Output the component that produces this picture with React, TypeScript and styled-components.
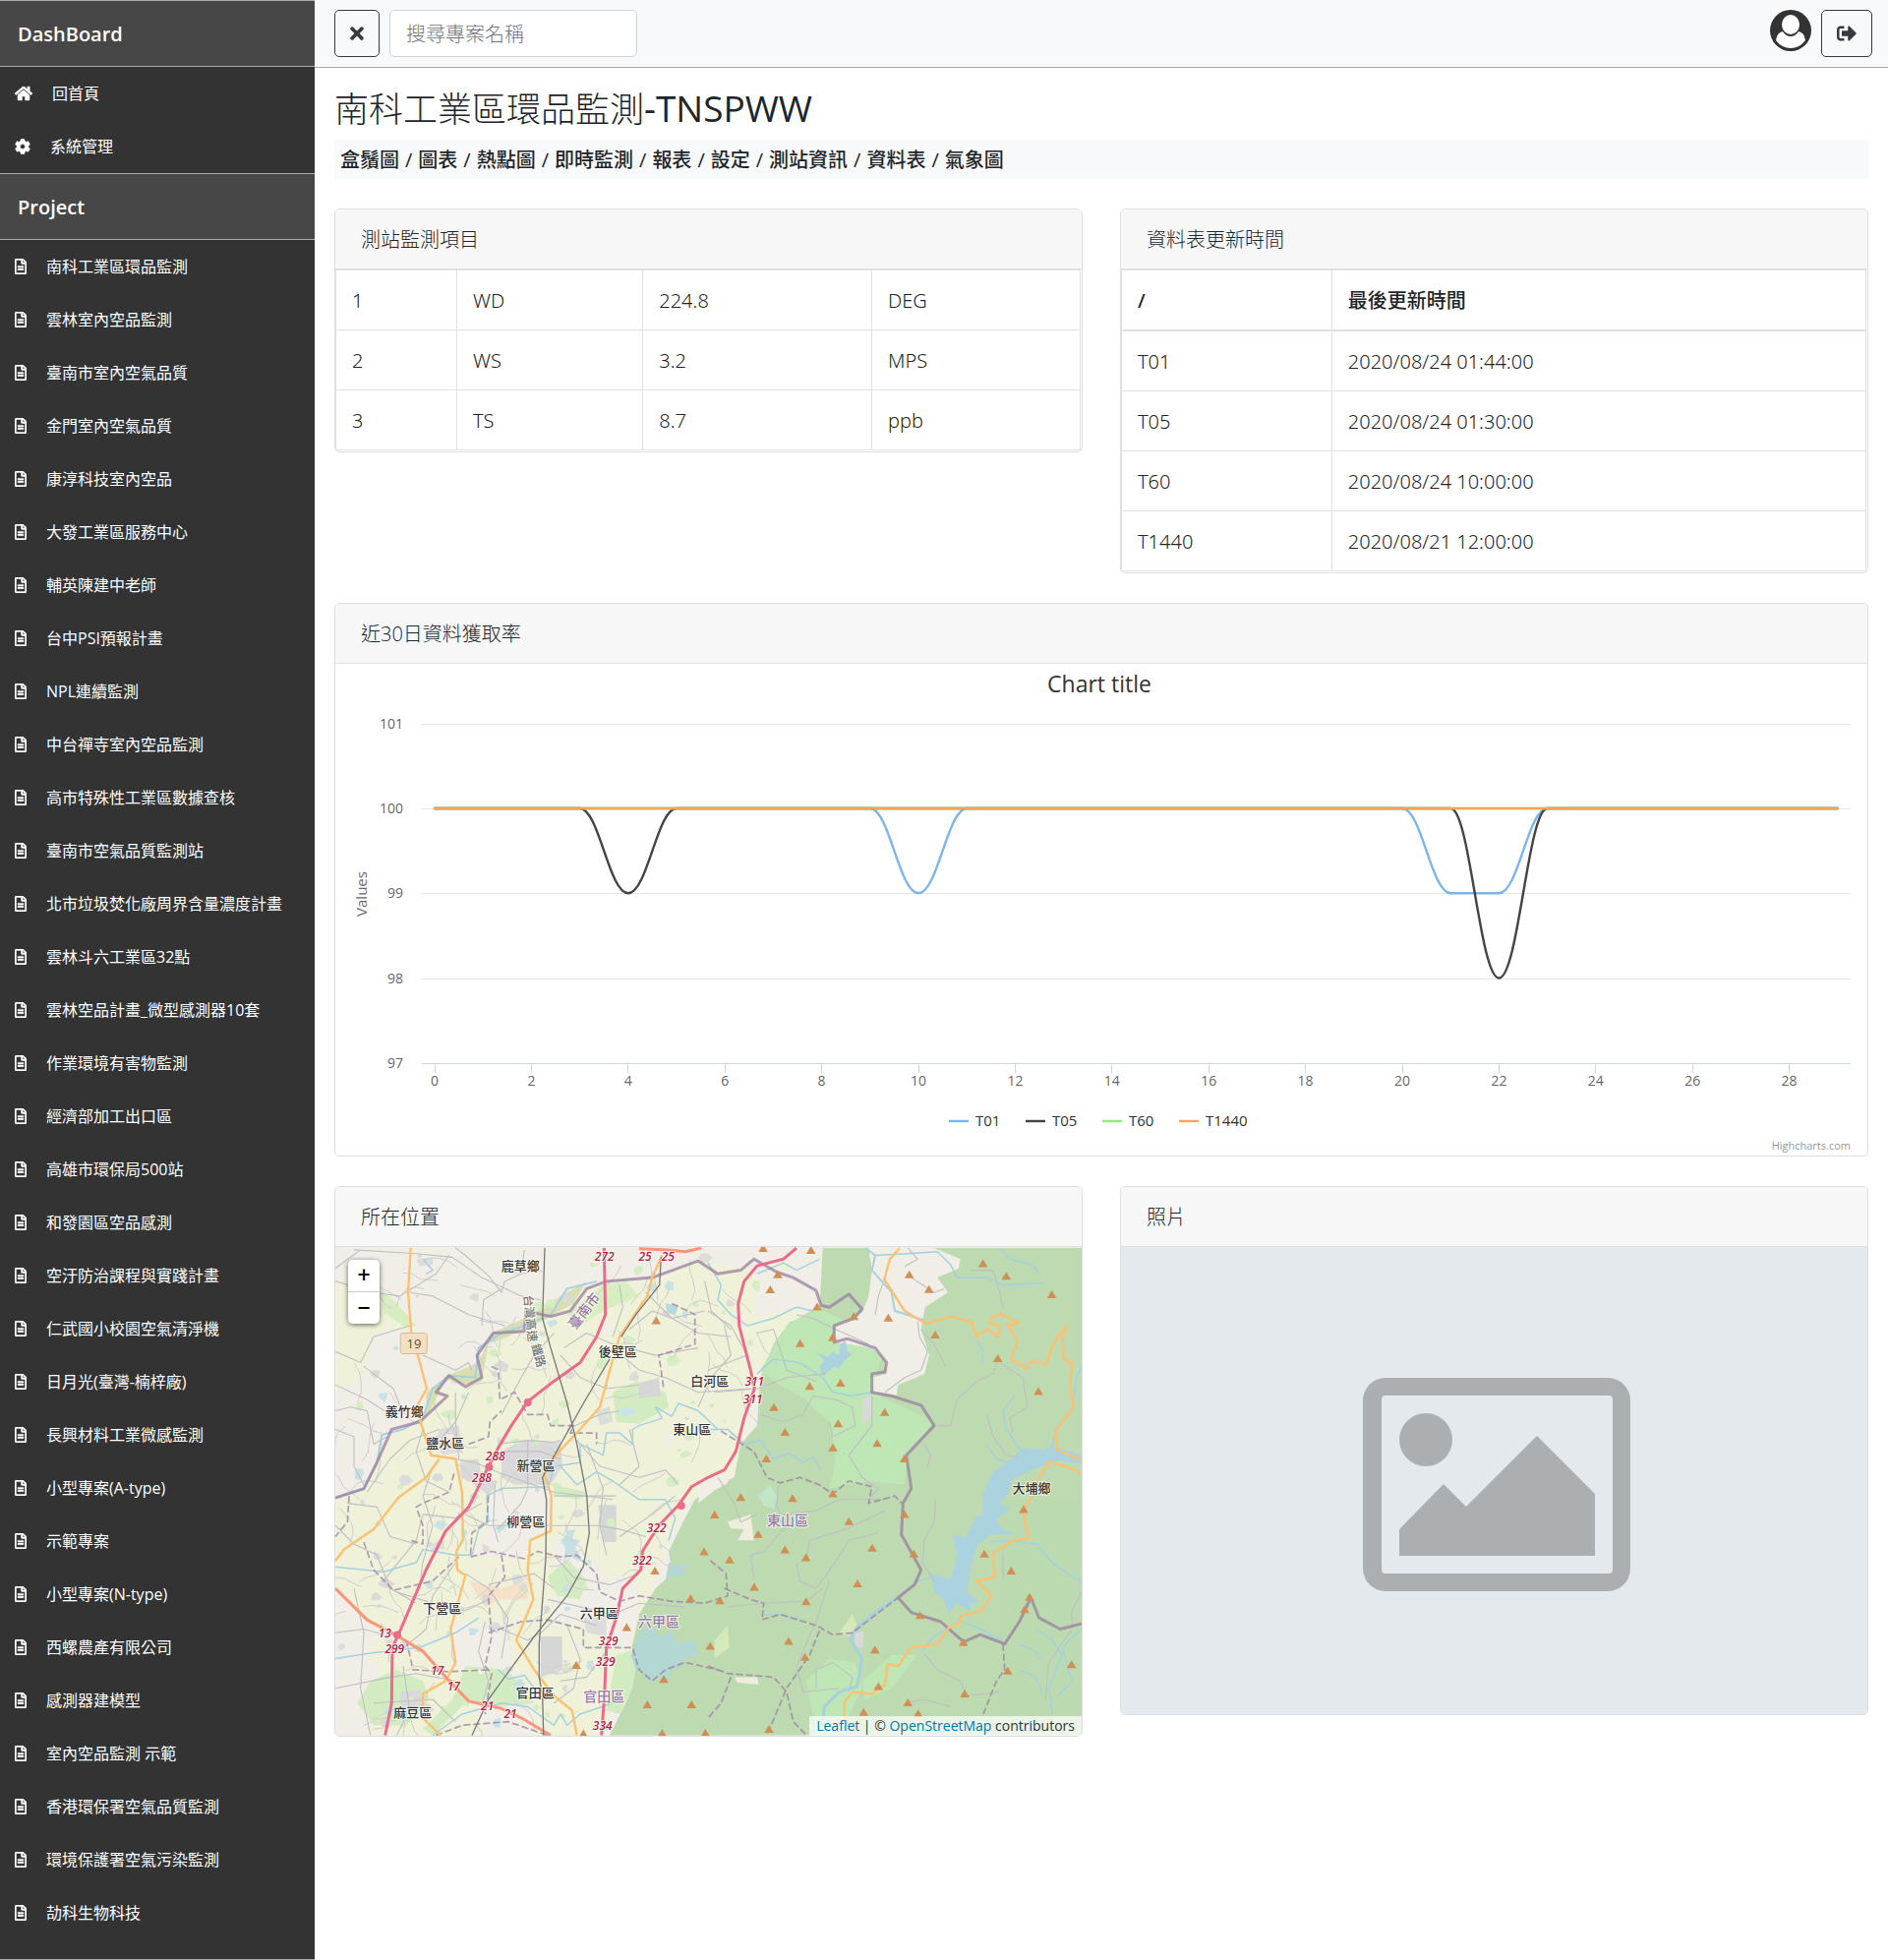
import React from "react";
import styled, { createGlobalStyle, css } from "styled-components";
import { FaHome, FaCog, FaRegFileAlt, FaTimes, FaSignOutAlt } from "react-icons/fa";

const GlobalStyle = createGlobalStyle`
  *, *::before, *::after { box-sizing: border-box; }
  body {
    margin: 0;
    background: #fff;
    color: #212529;
    font-family: "Open Sans", "Noto Sans CJK TC", sans-serif;
    font-size: 20px;
    line-height: 30px;
  }
`;

/* ---------- page frame ---------- */

const Page = styled.div`
  display: flex;
  align-items: stretch;
  min-height: 100vh;
`;

const Sidebar = styled.nav`
  flex: 0 0 320px;
  background: #333;
  color: #fff;
  padding-bottom: 19px;
  border-bottom: 1px solid #aaa;
`;

const SidebarHeading = styled.h2`
  margin: 0;
  padding: 19px 18px 17px;
  border-top: 1px solid #aaa;
  border-bottom: 1px solid #aaa;
  background: #474747;
  font-size: 20px;
  line-height: 30px;
  font-weight: 600;
`;

const MenuList = styled.ul`
  list-style: none;
  margin: 0;
  padding: 0;
`;

const MenuLink = styled.a<{ $icon: number }>`
  display: flex;
  align-items: center;
  gap: 20px;
  height: 54px;
  padding: 0 15px;
  color: #fff;
  font-size: 16px;
  line-height: 24px;
  text-decoration: none;
  white-space: nowrap;

  svg {
    flex: none;
    width: ${(p) => p.$icon}px;
    height: 16px;
    stroke-width: 14px;
  }
`;

const Content = styled.div`
  flex: 1;
  min-width: 0;
`;

const TopBar = styled.header`
  display: flex;
  align-items: flex-start;
  gap: 10px;
  padding: 10px 16px 10px 20px;
  background: #f8f9fa;
  border-bottom: 1px solid #aaa;
`;

const OutlineButton = styled.button<{ $icon: number }>`
  display: flex;
  align-items: center;
  height: 48px;
  padding: 0 15px;
  border: 1px solid #343a40;
  border-radius: 5px;
  background: transparent;
  color: #343a40;
  cursor: pointer;

  svg {
    flex: none;
    width: ${(p) => p.$icon}px;
    height: 20px;
  }
`;

const SearchInput = styled.input`
  width: 252px;
  height: 48px;
  margin-right: auto;
  padding: 0 16px;
  border: 1px solid #ced4da;
  border-radius: 5px;
  background: #fff;
  font: inherit;
  font-weight: 300;
  color: #495057;

  &::placeholder {
    color: #6c757d;
    opacity: 1;
  }
`;

const Main = styled.main`
  padding: 20px 20px 0;
`;

const Title = styled.h1`
  margin: 0 0 10px;
  font-size: 35px;
  line-height: 42px;
  font-weight: 300;
`;

const TitleCode = styled.span`
  font-size: 37px;
  font-weight: 400;
`;

const Crumbs = styled.nav`
  padding: 6px 6px 4px;
  margin-bottom: 30px;
  background: #f8f9fa;
  font-weight: 500;

  a {
    color: inherit;
    text-decoration: none;
  }
`;

const Slash = styled.span`
  margin: 0 6px;
`;

const CardGrid = styled.div`
  display: grid;
  grid-template-columns: repeat(2, minmax(0, 1fr));
  align-items: start;
  gap: 30px 38px;
`;

const Card = styled.section<{ $wide?: boolean; $inset?: boolean }>`
  ${(p) => p.$wide && css`grid-column: 1 / -1;`}
  padding-bottom: ${(p) => (p.$inset ? 1 : 0)}px;
  border: 1px solid #dfdfdf;
  border-radius: 5px;
  overflow: hidden;
  background: #fff;
`;

const CardHeader = styled.h3`
  margin: 0;
  padding: 16px 26px 14px;
  border-bottom: 1px solid #dfdfdf;
  background: #f7f7f7;
  font-size: 20px;
  line-height: 30px;
  font-weight: 300;
`;

const DataTable = styled.table`
  width: calc(100% - 1px);
  table-layout: fixed;
  border-collapse: collapse;
  font-family: "Noto Sans", "Noto Sans CJK TC", sans-serif;
  font-weight: 300;

  th, td {
    padding: 16px 16px 14px;
    border: 1px solid #dee2e6;
    text-align: left;
    line-height: 30px;
  }
  th { font-weight: 500; }
  thead th { border-bottom-width: 2px; }
`;

const Col = styled.col<{ $w?: string }>`
  width: ${(p) => p.$w || "auto"};
`;

/* ---------- chart ---------- */

const ChartSvg = styled.svg`
  display: block;
  width: 100%;
  height: auto;

  text { font-family: "Open Sans", sans-serif; }
  .axis { font-size: 14px; fill: #666; }
  .axis-title { font-size: 15px; fill: #666; }
  .legend { font-size: 15px; fill: #333; }
  .title { font-size: 23px; fill: #333; }
  .credits { font-size: 11px; fill: #999; }
`;

const px = (i: number) => 101 + i * 49.2;
const py = (v: number) => 147 + (100 - v) * 86.25;

const flat = () => Array.from({ length: 30 }, () => 100);
const withDips = (dips: Record<number, number>) => flat().map((v, i) => dips[i] ?? v);

const SERIES = [
  { name: "T01", color: "#7cb5ec", values: withDips({ 10: 99, 21: 99, 22: 99 }), x: 624 },
  { name: "T05", color: "#434348", values: withDips({ 4: 99, 22: 98 }), x: 702 },
  { name: "T60", color: "#90ed7d", values: flat(), x: 780 },
  { name: "T1440", color: "#f7a35c", values: flat(), x: 858 },
];

const spline = (values: number[]) =>
  values
    .map((v, i) => {
      if (i === 0) return `M${px(0)} ${py(v)}`;
      const c = 19.7;
      return `C${px(i - 1) + c} ${py(values[i - 1])} ${px(i) - c} ${py(v)} ${px(i)} ${py(v)}`;
    })
    .join("");

function RateChart() {
  return (
    <ChartSvg viewBox="0 0 1558 500" role="img" aria-label="Chart title">
      <text className="title" x="777" y="29" textAnchor="middle">Chart title</text>
      {[101, 100, 99, 98, 97].map((v) => (
        <g key={v}>
          <path d={`M87 ${Math.round(py(v)) + 0.5}H1541`} stroke={v === 97 ? "#ccd6eb" : "#e6e6e6"} />
          <text className="axis" x="69" y={py(v) + 5} textAnchor="end">{v}</text>
        </g>
      ))}
      {Array.from({ length: 15 }, (_, k) => k * 2).map((i) => (
        <g key={i}>
          <path d={`M${Math.floor(px(i)) + 0.5} 406v10`} stroke="#ccd6eb" />
          <text className="axis" x={px(i)} y="429" textAnchor="middle">{i}</text>
        </g>
      ))}
      <text className="axis-title" transform="translate(32 234) rotate(-90)" textAnchor="middle">Values</text>
      {SERIES.map((s) => (
        <path key={s.name} d={spline(s.values)} fill="none" stroke={s.color} strokeWidth="2.4" strokeLinecap="round" />
      ))}
      {SERIES.map((s) => (
        <g key={s.name}>
          <path d={`M${s.x} 465h20`} stroke={s.color} strokeWidth="2.4" />
          <text className="legend" x={s.x + 27} y="470">{s.name}</text>
        </g>
      ))}
      <text className="credits" x="1541" y="494" textAnchor="end">Highcharts.com</text>
    </ChartSvg>
  );
}

/* ---------- map ---------- */

const MapFrame = styled.div`
  position: relative;
`;

const MapSvg = styled.svg`
  display: block;
  width: 100%;
  height: auto;

  text {
    font-family: "Open Sans", "Noto Sans CJK TC", sans-serif;
    text-anchor: middle;
    paint-order: stroke;
    stroke: rgba(255, 255, 255, 0.7);
    stroke-width: 2px;
    font-size: 13px;
    font-weight: 500;
    fill: #333;
  }
  .district { font-size: 14px; fill: #9a7aa5; }
  .exit { font-size: 12px; font-style: italic; font-weight: 600; fill: #b3203f; }
  .rail { font-size: 12px; fill: #777; }
  .road { font-size: 13px; fill: #6b4a2a; stroke: none; }
`;

const ZoomControl = styled.div`
  position: absolute;
  top: 13px;
  left: 13px;
  display: flex;
  flex-direction: column;
  border-radius: 5px;
  overflow: hidden;
  box-shadow: 0 1px 5px rgba(0, 0, 0, 0.6);
`;

const ZoomButton = styled.button`
  width: 32px;
  height: 33px;
  padding: 0 0 2px;
  border: 0;
  border-bottom: 1px solid #ccc;
  background: #fff;
  color: #000;
  font: inherit;
  font-size: 23px;
  font-weight: 600;
  cursor: pointer;

  &:last-child { height: 32px; border-bottom: 0; }
`;

const Attribution = styled.div`
  position: absolute;
  right: 0;
  bottom: 0;
  padding: 0 7px;
  background: rgba(255, 255, 255, 0.7);
  color: #333;
  font-size: 14px;
  line-height: 20px;

  a { color: #0078a8; text-decoration: none; }
`;

/* Survey coordinates are kept per sheet; the east sheet starts 1170 units further on. */
type Sheet = "w" | "e";
const mx = (x: number, s: Sheet) => Math.round(((x + (s === "e" ? 1170 : 0)) / 3 - 11) * 10) / 10;
const my = (y: number) => Math.round((y / 2.658 - 78) * 10) / 10;
const line = (pts: string, s: Sheet) =>
  "M" + pts.trim().split(/\s+/).map((p) => {
    const [x, y] = p.split(",").map(Number);
    return `${mx(x, s)} ${my(y)}`;
  }).join("L");

interface Shape { s: Sheet; p: string; c?: string; w?: number; dash?: string }

const AREAS: Shape[] = [
  { s: "w", c: "#eff1d8", p: "33,290 110,320 200,380 260,430 150,440 120,560 33,600" },
  { s: "w", c: "#eff1d8", p: "33,890 120,862 160,790 200,715 300,680 360,590 460,580 485,490 610,430 700,385 800,320 1000,295 1140,245 1290,270 1420,240 1460,400 1420,540 1300,650 1260,820 1100,900 1010,1090 960,1250 900,1400 850,1527 33,1527" },
  { s: "w", c: "#f1eee8", p: "510,870 690,860 690,980 620,1000 610,1050 450,1040 500,960" },
  { s: "w", c: "#f1eee8", p: "700,990 830,1060 870,1110 900,1090 960,1120 940,1280 880,1300 830,1220 700,1230" },
  { s: "w", c: "#f1eee8", p: "400,1220 560,1230 570,1330 640,1450 640,1527 500,1527 380,1300" },
  { s: "w", c: "#f1eee8", p: "33,1130 170,1250 130,1300 200,1400 130,1527 33,1527" },
  { s: "w", c: "#d7eec0", p: "170,320 210,350 280,420 250,425 180,385" },
  { s: "w", c: "#d7eec0", p: "740,390 850,310 920,300 960,340 850,380 780,420" },
  { s: "w", c: "#d9dfb0", p: "470,520 510,440 610,400 700,350 800,300 760,360 680,400 560,450 500,470 480,570 420,580 360,560" },
  { s: "w", c: "#d9dfb0", p: "310,600 370,560 350,600 310,670" },
  { s: "w", c: "#d2ebc1", p: "880,600 950,570 1040,600 1050,640 960,685 890,680" },
  { s: "w", c: "#d2ebc1", p: "430,1340 560,1350 640,1440 540,1450 430,1440 330,1527 300,1510 390,1430" },
  { s: "w", c: "#d2ebc1", p: "140,1380 220,1350 300,1380 320,1430 250,1500 150,1500 100,1440" },
  { s: "w", c: "#d2ebc1", p: "700,850 800,870 780,890 700,880" },
  { s: "w", c: "#d2ebc1", p: "680,1100 740,1050 800,1110 780,1160 710,1150" },
  { s: "w", c: "#f5e0c8", p: "440,1110 540,1130 620,1110 620,1160 540,1160 490,1180" },
  { s: "w", c: "#d9d9d9", p: "540,760 600,730 720,735 725,800 690,850 580,850 540,830" },
  { s: "w", c: "#d9d9d9", p: "415,785 470,780 480,830 530,840 500,880 460,850 415,830" },
  { s: "w", c: "#d6d6d6", p: "960,575 1020,560 1025,610 960,615" },
  { s: "w", c: "#d6d6d6", p: "835,905 890,905 890,1005 850,1005" },
  { s: "w", c: "#d6d6d6", p: "660,1260 725,1260 725,1350 660,1370" },
  { s: "w", c: "#d9d9d9", p: "230,1410 290,1405 310,1450 240,1480" },
  { s: "w", c: "#dcdcdc", p: "350,700 410,690 420,760 360,770 340,740" },
  { s: "w", c: "#dcdcdc", p: "830,650 870,640 880,680 840,690" },
  { s: "w", c: "#dcdcdc", p: "790,1210 860,1200 860,1260 800,1250" },
  { s: "w", c: "#dcdcdc", p: "280,240 330,235 330,255 290,260" },
  { s: "e", c: "#bddab1", p: "-230,1280 -210,1200 -160,1130 -110,1090 -120,1030 -70,940 -40,890 30,850 80,830 100,740 150,690 160,560 200,470 250,410 340,380 350,210 1140,210 1140,1527 -300,1527 -240,1420" },
  { s: "e", c: "#bfe6b5", p: "160,540 240,420 330,370 450,420 530,500 500,600 690,680 610,770 600,850 480,840 370,860 390,780 380,720 300,620 200,570" },
  { s: "e", c: "#bddab1", p: "200,640 290,620 370,680 370,760 300,780 230,740 190,700" },
  { s: "e", c: "#bfe6b5", p: "300,1380 370,1320 450,1330 470,1400 400,1527 330,1527" },
  { s: "e", c: "#bfe6b5", p: "470,1380 560,1310 640,1310 560,1400 480,1430" },
  { s: "e", c: "#d6e9b8", p: "20,1270 60,1230 65,1290 20,1320" },
  { s: "e", c: "#d6e9b8", p: "400,1250 440,1200 455,1230 430,1260" },
  { s: "e", c: "#efeedd", p: "60,950 130,930 140,1000 90,1000 110,970 70,968" },
  { s: "e", c: "#efeedd", p: "80,1370 150,1370 155,1390 90,1385" },
  { s: "e", c: "#f1eee8", p: "140,260 250,270 330,330 330,370 220,380 150,400" },
  { s: "e", c: "#f1eee8", p: "490,210 690,210 770,240 765,265 700,290 732,330 662,370 650,430 675,500 660,550 580,580 575,607 505,600 500,560 545,550 540,510 500,480 390,465 385,425 470,385 490,340 500,270" },
  { s: "e", c: "#f1eee8", p: "-20,840 60,820 60,845 20,865 -30,900" },
  { s: "e", c: "#c1e7c8", p: "155,880 190,850 210,880 200,915 170,905" },
  { s: "e", c: "#d9d9d9", p: "470,620 500,605 500,660 475,690" },
  { s: "e", c: "#d9d9d9", p: "445,1250 475,1245 475,1290 450,1290" },
  { s: "w", c: "#d2ebc1", p: "890,1310 960,1290 940,1400 900,1470 860,1460" },
  { s: "w", c: "#b3d7d3", p: "950,1270 975,1240 1000,1235 1020,1262 1060,1245 1075,1280 1130,1270 1138,1310 1100,1320 1080,1350 1060,1340 1050,1380 1010,1370 990,1388 975,1355 950,1350 935,1310" },
  { s: "w", c: "#b3d7d3", p: "1050,1060 1075,1070 1110,1060 1095,1085 1100,1100 1060,1095 1040,1110" },
  { s: "w", c: "#c5dfe2", p: "735,950 745,975 765,970 755,995 780,1000 765,1020 790,1060 760,1050 745,1035 730,1060 735,1020 720,1000 738,985" },
  { s: "w", c: "#b5d9df", p: "1040,360 1080,365 1070,390 1045,385" },
  { s: "e", c: "#aad3df", p: "340,530 355,515 330,490 365,505 380,490 400,500 405,470 420,462 425,490 440,495 415,515 400,535 385,530 350,556" },
  { s: "e", c: "#aad3df", p: "1140,770 1140,795 1070,785 1000,805 930,835 915,875 890,900 920,915 880,945 900,970 935,985 860,985 820,1015 800,1080 790,1140 825,1165 800,1175 800,1190 755,1170 735,1200 720,1160 690,1140 680,1090 740,1105 760,1040 745,985 785,995 815,940 838,930 840,870 870,815 920,785 960,750 1030,755 1050,745" },
];

const STREAMS: Shape[] = [
  { s: "w", w: 2, p: "33,885 120,862 160,790 175,715 240,700 300,670 330,590 380,555 460,560 470,480 540,440 610,420 690,390 740,320 830,300" },
  { s: "w", p: "33,1072 180,1085 280,1060 300,1025 400,1040 450,1040 470,970 500,950 495,880 540,860 680,855" },
  { s: "w", p: "685,850 700,800 780,790 780,740 850,770 860,710 900,710 940,740 940,700 960,690 1030,670 1010,640 1060,665 1080,630 1140,650 1200,700" },
  { s: "w", p: "33,1320 140,1305 290,1290 400,1250 470,1210" },
  { s: "w", p: "330,1527 420,1470 540,1440 620,1450 700,1500 720,1470 740,1500 780,1470 880,1440" },
  { s: "w", p: "720,800 770,850 830,815 880,840 960,890 1040,890 1070,940 1050,1000" },
  { s: "w", p: "300,240 330,270 310,280" },
  { s: "w", p: "530,1350 560,1375 610,1365 640,1400" },
  { s: "e", p: "0,250 40,310 30,350 70,390 120,420 200,400 270,370 320,380" },
  { s: "e", p: "150,280 230,250 270,270 340,240" },
  { s: "e", p: "150,550 200,510 280,520 350,560 380,600 440,610 500,600" },
  { s: "e", p: "0,700 60,700 110,740 160,730 200,780 250,765 290,790 320,775 345,810" },
  { s: "e", w: 2, p: "480,210 510,230 500,270 560,330 570,380 660,405" },
  { s: "e", p: "510,230 610,225 700,220 740,255 760,290 850,290 900,310 1020,305" },
  { s: "e", p: "890,210 920,240 990,255 1010,280" },
  { s: "e", p: "820,460 840,490 835,520" },
  { s: "e", p: "935,610 900,650 910,700 950,750 970,770" },
  { s: "e", p: "850,740 880,780 920,790" },
  { s: "e", p: "1140,530 1125,560 1110,650 1060,700 1050,750" },
  { s: "e", p: "860,1005 920,1000 1000,1010 1050,1060 1140,1115" },
  { s: "e", w: 3, p: "350,1500 355,1450 400,1410 455,1395 470,1320 435,1270 450,1240 510,1195 580,1155" },
  { s: "e", p: "580,1155 640,1110 690,1100" },
  { s: "e", p: "740,1230 690,1260 650,1300" },
  { s: "e", p: "950,1280 1000,1300 1015,1325" },
  { s: "e", p: "950,1350 1000,1370 1020,1415" },
  { s: "e", p: "1000,1240 1050,1270 1080,1310 1040,1400 1050,1470" },
  { s: "e", p: "1140,1240 1080,1290 1110,1380 1070,1420" },
  { s: "e", p: "760,1215 830,1240 900,1270" },
  { s: "e", p: "170,1200 220,1200 300,1220" },
];

const MINOR: Shape[] = [
  { s: "w", p: "33,265 110,215" }, { s: "w", p: "90,215 280,225 390,235 480,290 600,340 660,350" },
  { s: "w", p: "33,300 150,330 230,340 340,280 380,230" }, { s: "w", p: "400,210 430,230 500,285 540,330 550,300 600,280 610,215" },
  { s: "w", p: "480,420 485,350 540,320" }, { s: "w", p: "260,330 330,340 440,390 550,420" },
  { s: "w", p: "33,490 110,520 150,450 260,420" }, { s: "w", p: "33,580 130,620 200,660 240,640" },
  { s: "w", p: "120,530 210,590 235,645 300,640" }, { s: "w", p: "300,500 400,540 440,520 450,540" },
  { s: "w", p: "33,700 90,720 90,800 120,850" }, { s: "w", p: "33,650 80,640 130,650 150,740 190,720" },
  { s: "w", p: "300,700 280,760 310,840 380,870" }, { s: "w", p: "130,870 200,780 260,730 350,700" },
  { s: "w", p: "70,900 160,910 200,990 280,1010" }, { s: "w", p: "400,600 400,680 410,780" },
  { s: "w", p: "440,600 400,680 360,720" }, { s: "w", p: "340,770 460,790 540,820 700,870 880,890" },
  { s: "w", p: "530,740 620,730 700,735 720,730" }, { s: "w", p: "540,760 660,760 720,780" },
  { s: "w", p: "620,730 620,860 600,900 530,970" }, { s: "w", p: "520,850 515,960 530,1005" },
  { s: "w", p: "480,900 400,940 300,930 280,1000 180,1110" }, { s: "w", p: "430,930 500,960 640,960 830,960 900,970 980,990" },
  { s: "w", p: "700,880 890,880" }, { s: "w", p: "770,730 840,800 960,830 1040,810 1080,850" },
  { s: "w", p: "700,440 640,500 600,560 540,660" }, { s: "w", p: "720,500 780,560 860,590 960,580" },
  { s: "w", p: "730,480 800,440 880,470 1010,500 1140,480" }, { s: "w", p: "900,310 910,370 880,450" },
  { s: "w", p: "980,330 1060,400 1140,440 1240,450" }, { s: "w", p: "930,430 1000,380 1060,400 1160,380" },
  { s: "w", p: "880,480 960,540 1040,560 1140,600 1300,590" }, { s: "w", p: "740,700 840,660 900,650" },
  { s: "w", p: "930,700 960,800 900,850" }, { s: "w", p: "800,740 850,860 840,960 860,1040" },
  { s: "w", p: "330,800 300,880 330,960 300,1060 290,1130" }, { s: "w", p: "33,960 90,1010 160,1040 200,1130 280,1170" },
  { s: "w", p: "220,1140 330,1170 430,1190 500,1160" }, { s: "w", p: "400,1060 330,1150 310,1240 230,1300" },
  { s: "w", p: "33,1250 120,1240 200,1260" }, { s: "w", p: "90,1130 120,1250 110,1400 140,1527" },
  { s: "w", p: "33,1400 200,1370 280,1360 400,1380" }, { s: "w", p: "430,1090 500,1130 560,1210 540,1320" },
  { s: "w", p: "500,1120 640,1090 700,1130" }, { s: "w", p: "490,1220 470,1300 500,1380 480,1450" },
  { s: "w", p: "540,1240 620,1270 660,1250 720,1200 830,1230" }, { s: "w", p: "680,1160 780,1180 880,1200 960,1170 1100,1180" },
  { s: "w", p: "700,1040 760,1100 870,1120 960,1090" }, { s: "w", p: "740,1230 780,1320 760,1400 700,1440" },
  { s: "w", p: "860,1300 800,1370 720,1380" }, { s: "w", p: "240,1340 260,1460 220,1527" },
  { s: "w", p: "150,1440 330,1430 400,1490" }, { s: "w", p: "1070,880 1000,930 900,990" },
  { s: "w", p: "1140,640 1180,560 1240,500 1220,420" }, { s: "w", p: "1160,300 1180,380 1240,430" },
  { s: "e", p: "0,380 70,420 120,500 0,540" }, { s: "e", p: "20,600 150,590 240,560 360,550" },
  { s: "e", p: "150,440 200,430 240,540 330,570" }, { s: "e", p: "160,660 230,680 290,660 320,610 390,620 440,640 450,690 380,720 370,680" },
  { s: "e", p: "500,610 500,690 430,770 470,830 520,860 490,890" }, { s: "e", p: "270,390 320,400 390,430 490,470" },
  { s: "e", p: "30,830 80,900 100,950 150,930" }, { s: "e", p: "215,850 210,910 240,960 170,1030 130,1040 140,1100" },
  { s: "e", p: "230,930 330,920 400,890 540,890" }, { s: "e", p: "300,1060 310,1000 420,970 540,920" },
  { s: "e", p: "270,1060 280,1110 330,1130 380,1070 430,1000 520,980" }, { s: "e", p: "370,1110 330,1220 270,1340 290,1410 400,1400" },
  { s: "e", p: "60,1180 170,1170 300,1165 350,1130" }, { s: "e", p: "330,1400 330,1350 380,1330 440,1370 430,1410" },
  { s: "e", p: "540,290 520,340 510,390" }, { s: "e", p: "610,210 640,240 600,260" }, { s: "e", p: "620,290 690,330 720,320" },
  { s: "e", p: "640,410 645,450 670,490 650,540 600,560 540,600" }, { s: "e", p: "650,430 690,470 725,530" },
  { s: "e", p: "700,690 740,690 760,620 820,570 870,550 885,510" }, { s: "e", p: "800,270 870,270 890,330 900,375" },
  { s: "e", p: "890,520 960,560 975,640 920,670 930,710" }, { s: "e", p: "850,660 870,720 910,770 945,775" },
  { s: "e", p: "695,890 690,950 660,1000 655,1060 690,1110" }, { s: "e", p: "900,1030 900,1100" },
  { s: "e", p: "660,740 680,770 670,800" }, { s: "e", p: "660,1305 700,1350 770,1380 790,1420 890,1410" },
  { s: "e", p: "1140,1140 1110,1190 1110,1240 1040,1330 1030,1430" }, { s: "e", p: "600,1440 660,1430 740,1450" },
];

const BORDERS: Shape[] = [
  { s: "w", w: 3, p: "33,885 120,860 160,790 205,700 290,680 375,610 340,600 380,555 430,585 480,560 465,500 515,440 610,435 615,380 690,395 750,380 800,320 860,300 1000,290 1140,245 1200,280 1270,270 1310,240 1380,275 1430,290 1500,325" },
  { s: "e", w: 3, p: "330,325 345,365 370,370 430,335 470,375 445,400 385,420 385,465 425,455 510,480 545,520 540,545 500,550 500,600 560,610 650,635 690,690 605,770 620,860 595,900 590,985 650,1080 630,1120 580,1155 620,1195 710,1220 780,1275 830,1255 905,1280 950,1220 985,1155 1010,1210 1075,1240 1140,1225" },
  { s: "w", dash: "7 3", p: "75,880 70,950 33,990" },
  { s: "w", dash: "7 3", p: "395,820 380,870 300,900 280,910 300,960 300,1010 260,1000" },
  { s: "w", dash: "7 3", p: "510,530 530,540 535,620 580,600 620,660 680,660 690,690 760,690 750,710 830,710 830,740" },
  { s: "w", dash: "7 3", p: "440,740 500,720 505,680 540,650" },
  { s: "w", dash: "7 3", p: "500,880 495,950 450,980 445,1045 510,1030 610,1050 650,1030 720,1045 770,1040 830,1090 840,1140 900,1165 960,1150 1060,1165 1160,1170 1230,1150 1225,1090 1170,1050" },
  { s: "w", dash: "7 3", p: "120,1005 150,1080 210,1135 330,1110 410,1045" },
  { s: "w", dash: "7 3", p: "540,1040 550,1100 500,1150 510,1260 490,1340 510,1360 490,1470" },
  { s: "w", dash: "7 3", p: "250,1270 270,1350 380,1355 500,1350" },
  { s: "w", dash: "7 3", p: "340,1527 420,1500 560,1490 680,1527" },
  { s: "w", dash: "7 3", p: "500,1250 600,1220 680,1215 790,1240 790,1290 940,1290 960,1350 1000,1380 1040,1350 1100,1330 1200,1350" },
  { s: "w", dash: "7 3", p: "1060,360 1130,390 1130,470 1020,500 1035,590" },
  { s: "e", dash: "7 3", p: "40,705 140,760 180,830 220,845 280,830 340,850 380,875 430,840 500,855 490,900 570,880 590,900" },
  { s: "e", dash: "7 3", p: "50,1130 130,1160 170,1170 165,1215 220,1200 330,1230 380,1255 440,1250 580,1155" },
  { s: "e", dash: "7 3", p: "340,1245 310,1310 240,1400 180,1527" },
  { s: "e", dash: "7 3", p: "0,1340 60,1360 200,1370 240,1410 260,1490 300,1527" },
  { s: "e", dash: "7 3", p: "70,1370 40,1440 0,1480" },
  { s: "e", dash: "7 3", p: "900,1280 905,1350 880,1380 840,1470" },
];

const PRIMARY: Shape[] = [
  { s: "w", p: "263,210 255,330 265,440 285,500 312,590 280,640 300,700 325,770 400,780 420,870 422,1000 402,1030 405,1080 430,1095 385,1240 400,1330 370,1380 300,1415 300,1480 355,1527" },
  { s: "w", p: "350,780 310,830 225,885 150,970 60,1025 33,1055" },
  { s: "w", p: "1030,230 1000,290 985,340 900,450 880,510 840,640 780,700 710,765 670,820 692,880 690,975 628,1000 620,1080 637,1160 585,1270 640,1350 700,1420 755,1460 770,1527" },
  { s: "e", p: "585,210 555,240 538,295 600,380 665,415 740,395 805,410 820,450 850,430 885,450 890,420 860,415 865,398 895,388 925,405 950,412 915,420 945,460 925,510 970,535 985,515 1030,525 1060,460 1095,420 1080,450 1085,510 1110,520 1105,580 1115,640 1060,705 1065,755 1140,785" },
  { s: "e", p: "1140,820 1090,800 1040,787 1010,830 990,880 960,915 970,960 980,995 930,1000 870,1035 875,1100 820,1110 865,1150 835,1190 770,1205 770,1225 735,1235 700,1280 620,1290 580,1340 548,1335 540,1390 500,1415 440,1410 415,1440 418,1490" },
];
const TRUNK: Shape[] = [
  { s: "w", p: "33,1130 130,1215 225,1260 300,1300 370,1370 440,1435 540,1455 600,1480 690,1527" },
  { s: "w", p: "960,212 1050,215 1100,220 1150,210" },
];
const MOTORWAY: Shape[] = [
  { s: "w", p: "853,210 857,390 830,450 780,520 700,570 620,625 570,690 530,750 495,810 440,910 370,975 310,1080 228,1250 207,1290 205,1440 185,1527" },
  { s: "e", p: "270,210 230,240 150,258 110,300 92,360 95,420 130,540 142,590 110,670 85,760 50,810 0,830 -50,855 -90,905 -150,960 -200,1030 -205,1080 -260,1130 -280,1210 -310,1290 -316,1420 -325,1527" },
];
const RAIL: Shape[] = [
  { s: "w", p: "672,210 665,400 690,480 740,630 770,740 800,880 808,980 790,1070 740,1150 640,1260 500,1430 450,1527" },
  { s: "w", p: "1027,235 1022,310 950,390 905,450" },
  { s: "w", p: "870,510 790,630 705,765 665,830 677,890 675,1050 655,1280 655,1370 665,1420 668,1527" },
];

/* Lanes, hamlets and orchards of the western plain, scattered from a fixed seed. */
const plainEdge = (y: number) => (y < 600 ? 1340 : y < 850 ? 1230 : y < 1100 ? 1060 : 900);
const scatter = (count: number, seed: number, make: (x: number, y: number, rnd: () => number) => Shape) => {
  let n = seed;
  const rnd = () => {
    n = (n * 1664525 + 1013904223) % 4294967296;
    return n / 4294967296;
  };
  return Array.from({ length: count }, () => {
    const y = 230 + rnd() * 1270;
    const x = 45 + rnd() * (plainEdge(y) - 45);
    return make(x, y, rnd);
  });
};
const LANES = scatter(110, 7, (x, y, rnd) => {
  let a = rnd() * 6.28;
  let p = `${x},${y}`;
  for (let k = 0; k < 4; k++) {
    a += (rnd() - 0.5) * 1.2;
    x = Math.max(33, x + Math.cos(a) * 28);
    y += Math.sin(a) * 28;
    p += ` ${x},${y}`;
  }
  return { s: "w", p };
});
const PATCH_COLORS = ["#dadad6", "#d5edc2", "#d5edc2", "#f2eee4", "#dcdcd8", "#c9e2e6"];
const PATCHES = scatter(150, 42, (x, y, rnd) => {
  const r = 6 + rnd() * 14;
  const p = [0, 1, 2, 3, 4, 5]
    .map((k) => `${Math.max(33, x + Math.cos(k * 1.05) * r * (0.5 + rnd()))},${y + Math.sin(k * 1.05) * r * (0.4 + rnd() * 0.7)}`)
    .join(" ");
  return { s: "w", p, c: PATCH_COLORS[Math.floor(rnd() * PATCH_COLORS.length)] };
});

const PEAKS: Record<Sheet, string> = {
  w: "1012,405 1190,930 1158,1030 1008,1082 1117,1156 922,1235 1177,1285 768,1337 1035,1375 985,1443 1120,1443 1030,1520 1162,1520 790,1522",
  e: "168,210 314,215 213,281 190,322 333,368 445,394 380,451 281,467 550,398 614,281 674,321 839,251 910,285 1049,335 693,444 884,508 1008,597 310,583 404,574 201,640 539,653 397,684 235,707 381,749 516,737 178,779 599,779 100,883 258,886 381,873 599,929 430,948 153,983 235,1025 299,1046 501,1020 628,1036 843,1036 963,916 925,1082 66,1052 141,1126 456,1116 299,1165 36,1162 647,1202 779,1275 981,1153 966,1186 246,1272 296,1315 509,1295 520,1394 914,1352 1109,1335 783,1414 610,1438 475,1464 641,1468 186,1510",
};

interface Label { t: string; x: number; y: number; s?: Sheet; k?: string; r?: number }
const LABELS: Label[] = [
  { t: "鹿草鄉", x: 598, y: 258 }, { t: "後壁區", x: 895, y: 490 }, { t: "白河區", x: 1175, y: 570 },
  { t: "東山區", x: 1121, y: 700 }, { t: "義竹鄉", x: 244, y: 650 }, { t: "鹽水區", x: 368, y: 737 },
  { t: "新營區", x: 645, y: 796 }, { t: "柳營區", x: 614, y: 948 }, { t: "下營區", x: 359, y: 1182 },
  { t: "六甲區", x: 838, y: 1195 }, { t: "官田區", x: 643, y: 1410 }, { t: "麻豆區", x: 269, y: 1464 },
  { t: "大埔鄉", x: 987, y: 858, s: "e" },
  { t: "六甲區", x: 1020, y: 1220, k: "district" }, { t: "官田區", x: 853, y: 1421, k: "district" },
  { t: "東山區", x: 243, y: 947, s: "e", k: "district" },
  { t: "臺南市", x: 792, y: 380, k: "district", r: -52 },
  { t: "台灣高速", x: 630, y: 400, k: "rail", r: 84 }, { t: "鐵路", x: 655, y: 500, k: "rail", r: 74 },
  { t: "272", x: 854, y: 230, k: "exit" }, { t: "25", x: 978, y: 230, k: "exit" }, { t: "25", x: 1048, y: 230, k: "exit" },
  { t: "288", x: 521, y: 770, k: "exit" }, { t: "288", x: 480, y: 830, k: "exit" },
  { t: "322", x: 1013, y: 966, k: "exit" }, { t: "322", x: 969, y: 1052, k: "exit" },
  { t: "329", x: 866, y: 1270, k: "exit" }, { t: "329", x: 857, y: 1326, k: "exit" }, { t: "334", x: 848, y: 1500, k: "exit" },
  { t: "13", x: 184, y: 1248, k: "exit" }, { t: "299", x: 214, y: 1291, k: "exit" },
  { t: "17", x: 344, y: 1349, k: "exit" }, { t: "17", x: 394, y: 1393, k: "exit" },
  { t: "21", x: 497, y: 1447, k: "exit" }, { t: "21", x: 567, y: 1466, k: "exit" },
  { t: "311", x: 142, y: 569, s: "e", k: "exit" }, { t: "311", x: 137, y: 616, s: "e", k: "exit" },
];

function Areas({ shapes }: { shapes: Shape[] }) {
  return <g>{shapes.map((f, i) => <path key={i} d={line(f.p, f.s) + "Z"} fill={f.c} />)}</g>;
}

function Lines({ shapes, color, width, opacity = 1 }: { shapes: Shape[]; color: string; width: number; opacity?: number }) {
  return (
    <g fill="none" stroke={color} strokeLinejoin="round" opacity={opacity}>
      {shapes.map((f, i) => (
        <path key={i} d={line(f.p, f.s)} strokeWidth={f.w ?? width} strokeDasharray={f.dash} />
      ))}
    </g>
  );
}

function StationMap() {
  return (
    <MapFrame>
      <MapSvg viewBox="0 0 759 497" role="img" aria-label="所在位置">
        <rect width="759" height="497" fill="#f1eee8" />
        <Areas shapes={AREAS} />
        <Areas shapes={PATCHES} />
        <Lines shapes={LANES} color="#cfcfcf" width={1} />
        <Lines shapes={MINOR} color="#bfbfc4" width={1.1} />
        <Lines shapes={STREAMS} color="#a5d1df" width={1.5} />
        <Lines shapes={BORDERS} color="#9b7fa0" width={1.7} opacity={0.75} />
        <Lines shapes={PRIMARY} color="#fbc173" width={2.4} />
        <Lines shapes={TRUNK} color="#fb9579" width={3} />
        <Lines shapes={MOTORWAY} color="#e96c8b" width={3} />
        <Lines shapes={RAIL} color="#777" width={1.3} />
        {[[620, 627], [502, 802], [1088, 906], [222, 1256]].map(([x, y]) => (
          <circle key={x} cx={mx(x, "w")} cy={my(y)} r="4" fill="#e96c8b" />
        ))}
        {(Object.keys(PEAKS) as Sheet[]).map((s) =>
          PEAKS[s].split(" ").map((p) => {
            const [x, y] = p.split(",").map(Number);
            return <path key={s + p} d={`M${mx(x, s)} ${my(y) - 4}l4.8 8h-9.6z`} fill="#d08f55" />;
          })
        )}
        <rect x={mx(232, "w")} y={my(440)} width="27" height="21" rx="2" fill="#f3e0c4" stroke="#d9b98f" />
        <text className="road" x={mx(273, "w")} y={my(468) + 5}>19</text>
        {LABELS.map((l, i) => (
          <text key={i} className={l.k} transform={`translate(${mx(l.x, l.s ?? "w")} ${my(l.y)}) rotate(${l.r ?? 0})`} y="5">
            {l.t}
          </text>
        ))}
      </MapSvg>
      <ZoomControl>
        <ZoomButton type="button" aria-label="Zoom in">+</ZoomButton>
        <ZoomButton type="button" aria-label="Zoom out">−</ZoomButton>
      </ZoomControl>
      <Attribution>
        <a href="#leaflet">Leaflet</a> | © <a href="#osm">OpenStreetMap</a> contributors
      </Attribution>
    </MapFrame>
  );
}

/* ---------- small drawings ---------- */

const AvatarSvg = styled.svg`
  flex: none;
  width: 42px;
  height: 42px;
`;

function Avatar() {
  return (
    <AvatarSvg viewBox="0 0 42 42" role="img" aria-label="user">
      <circle cx="21" cy="21" r="21" fill="#333" />
      <ellipse cx="21" cy="15" rx="9" ry="10" fill="#fff" />
      <path d="M6 31Q7 23 13 22Q16 27 21 27T29 22Q35 23 36 31Q30 39 21 39T6 31Z" fill="#fff" />
    </AvatarSvg>
  );
}

const PhotoSvg = styled.svg`
  display: block;
  width: 100%;
  height: auto;
`;

function PhotoPlaceholder() {
  return (
    <PhotoSvg viewBox="0 0 759 475" role="img" aria-label="照片">
      <rect width="759" height="475" fill="#e4e9ed" />
      <g fill="#abafb2">
        <path fillRule="evenodd" d="M269 133H495A23 23 0 0 1 518 156V327A23 23 0 0 1 495 350H269A23 23 0 0 1 246 327V156A23 23 0 0 1 269 133ZM269 151A4 4 0 0 0 265 155V328A4 4 0 0 0 269 332H496A4 4 0 0 0 500 328V155A4 4 0 0 0 496 151Z" />
        <circle cx="310" cy="196" r="27" />
        <path d="M283 287L328 241L351 264L423 192L482 251V314H283Z" />
      </g>
    </PhotoSvg>
  );
}

/* ---------- data ---------- */

const PROJECTS = [
  "南科工業區環品監測", "雲林室內空品監測", "臺南市室內空氣品質", "金門室內空氣品質", "康淳科技室內空品",
  "大發工業區服務中心", "輔英陳建中老師", "台中PSI預報計畫", "NPL連續監測", "中台禪寺室內空品監測",
  "高市特殊性工業區數據查核", "臺南市空氣品質監測站", "北市垃圾焚化廠周界含量濃度計畫", "雲林斗六工業區32點",
  "雲林空品計畫_微型感測器10套", "作業環境有害物監測", "經濟部加工出口區", "高雄市環保局500站", "和發園區空品感測",
  "空汙防治課程與實踐計畫", "仁武國小校園空氣清淨機", "日月光(臺灣-楠梓廠)", "長興材料工業微感監測",
  "小型專案(A-type)", "示範專案", "小型專案(N-type)", "西螺農產有限公司", "感測器建模型", "室內空品監測 示範",
  "香港環保署空氣品質監測", "環境保護署空氣污染監測", "劼科生物科技",
];

const CRUMBS = ["盒鬚圖", "圖表", "熱點圖", "即時監測", "報表", "設定", "測站資訊", "資料表", "氣象圖"];

const ITEMS = [
  ["1", "WD", "224.8", "DEG"],
  ["2", "WS", "3.2", "MPS"],
  ["3", "TS", "8.7", "ppb"],
];

const UPDATES = [
  ["T01", "2020/08/24 01:44:00"],
  ["T05", "2020/08/24 01:30:00"],
  ["T60", "2020/08/24 10:00:00"],
  ["T1440", "2020/08/21 12:00:00"],
];

export default function App() {
  return (
    <>
      <GlobalStyle />
      <Page>
        <Sidebar>
          <SidebarHeading>DashBoard</SidebarHeading>
          <MenuList>
            <li><MenuLink href="#home" $icon={18}><FaHome />回首頁</MenuLink></li>
            <li><MenuLink href="#system" $icon={16}><FaCog />系統管理</MenuLink></li>
          </MenuList>
          <SidebarHeading>Project</SidebarHeading>
          <MenuList>
            {PROJECTS.map((name) => (
              <li key={name}><MenuLink href="#project" $icon={12}><FaRegFileAlt />{name}</MenuLink></li>
            ))}
          </MenuList>
        </Sidebar>
        <Content>
          <TopBar>
            <OutlineButton type="button" aria-label="關閉選單" $icon={14}><FaTimes /></OutlineButton>
            <SearchInput type="text" placeholder="搜尋專案名稱" aria-label="搜尋專案名稱" />
            <Avatar />
            <OutlineButton type="button" aria-label="登出" $icon={20}><FaSignOutAlt /></OutlineButton>
          </TopBar>
          <Main>
            <Title>南科工業區環品監測<TitleCode>-TNSPWW</TitleCode></Title>
            <Crumbs>
              {CRUMBS.map((c, i) => (
                <React.Fragment key={c}>{i > 0 && <Slash>/</Slash>}<a href="#view">{c}</a></React.Fragment>
              ))}
            </Crumbs>
            <CardGrid>
              <Card $inset>
                <CardHeader>測站監測項目</CardHeader>
                <DataTable>
                  <colgroup><Col $w="16.25%" /><Col $w="25%" /><Col $w="30.75%" /><Col /></colgroup>
                  <tbody>
                    {ITEMS.map((r) => <tr key={r[0]}>{r.map((c) => <td key={c}>{c}</td>)}</tr>)}
                  </tbody>
                </DataTable>
              </Card>
              <Card $inset>
                <CardHeader>資料表更新時間</CardHeader>
                <DataTable>
                  <colgroup><Col $w="28.25%" /><Col /></colgroup>
                  <thead><tr><th>/</th><th>最後更新時間</th></tr></thead>
                  <tbody>
                    {UPDATES.map((r) => <tr key={r[0]}>{r.map((c) => <td key={c}>{c}</td>)}</tr>)}
                  </tbody>
                </DataTable>
              </Card>
              <Card $wide>
                <CardHeader>近30日資料獲取率</CardHeader>
                <RateChart />
              </Card>
              <Card>
                <CardHeader>所在位置</CardHeader>
                <StationMap />
              </Card>
              <Card>
                <CardHeader>照片</CardHeader>
                <PhotoPlaceholder />
              </Card>
            </CardGrid>
          </Main>
        </Content>
      </Page>
    </>
  );
}
